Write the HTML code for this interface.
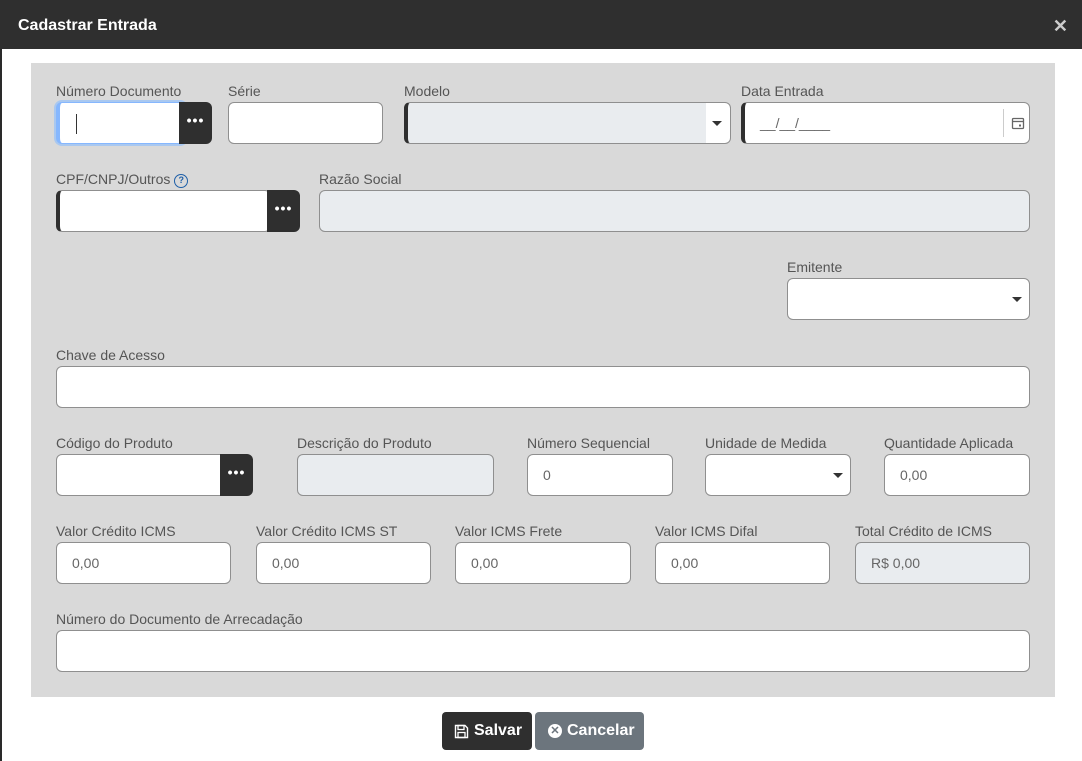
<!DOCTYPE html>
<html><head><meta charset="utf-8"><style>
*{box-sizing:border-box;margin:0;padding:0}
body{width:1082px;height:761px;background:#fff;font-family:"Liberation Sans",Arial,sans-serif;position:relative;overflow:hidden}
.hdr{position:absolute;left:0;top:0;width:1082px;height:49px;background:#2f2f2f;color:#fff}
.hdr .t{position:absolute;left:18px;top:17px;font-size:16px;font-weight:bold}
.hdr .x{position:absolute;right:14px;top:16px;font-size:18px;font-weight:bold;color:#ccc}
.side{position:absolute;left:0;top:49px;width:2px;height:712px;background:#2a2a2a}
.panel{position:absolute;left:31px;top:63px;width:1024px;height:634px;background:#d9d9d9}
.l{position:absolute;font-size:14px;color:#555}
.i{position:absolute;height:42px;background:#fff;border:1px solid #8f8f8f;border-radius:6px;font-size:14px;color:#666;padding:0 15px;line-height:40px}
.g{background:#e9ecef}
.lb{border-left:4px solid #2f2f2f}
.b{position:absolute;height:42px;background:#2f2f2f;border-radius:0 6px 6px 0;color:#fff;font-size:14px;font-weight:bold;text-align:center;line-height:36px;letter-spacing:1px}
.arr{position:absolute;width:0;height:0;border-left:5px solid transparent;border-right:5px solid transparent;border-top:5px solid #333}
.btn{position:absolute;top:712px;height:38px;border-radius:4px;color:#fff;font-size:16px;font-weight:bold;line-height:38px}
</style></head><body>
<div class="hdr"><div class="t">Cadastrar Entrada</div><div class="x">✕</div></div>
<div class="side"></div>
<div class="panel"></div>

<div class="l" style="left:56px;top:83px">Número Documento</div>
<div class="i lb" style="left:56px;top:102px;width:130px;border-color:#86b7fe;box-shadow:0 0 0 2px #a9c8f0"><span style="position:absolute;left:16px;top:11px;width:1px;height:20px;background:#333"></span></div>
<div class="b" style="left:179px;top:102px;width:33px">•••</div>
<div class="l" style="left:228px;top:83px">Série</div>
<div class="i" style="left:228px;top:102px;width:155px"></div>
<div class="l" style="left:404px;top:83px">Modelo</div>
<div class="i lb" style="left:404px;top:102px;width:327px;background:linear-gradient(to right,#e9ecef 298px,#fff 298px)"></div>
<div class="arr" style="left:712px;top:121px"></div>
<div class="l" style="left:741px;top:83px">Data Entrada</div>
<div class="i lb" style="left:741px;top:102px;width:289px;color:#666">__/__/____<span style="position:absolute;left:258px;top:6px;width:1px;height:28px;background:#ccc"></span>
<svg style="position:absolute;left:266px;top:13px" width="14" height="14" viewBox="0 0 14 14"><rect x="1.5" y="2.5" width="11" height="10" rx="1" fill="none" stroke="#666" stroke-width="1.3"/><line x1="1.5" y1="5.5" x2="12.5" y2="5.5" stroke="#666" stroke-width="1.3"/><rect x="8" y="8.5" width="2" height="2" fill="#666"/></svg></div>

<div class="l" style="left:56px;top:171px">CPF/CNPJ/Outros <span style="display:inline-block;width:14px;height:14px;border:1.5px solid #1d5fa8;border-radius:50%;font-size:9px;color:#1d5fa8;text-align:center;line-height:11px;font-weight:bold;vertical-align:1px">?</span></div>
<div class="i lb" style="left:56px;top:190px;width:215px"></div>
<div class="b" style="left:267px;top:190px;width:33px">•••</div>
<div class="l" style="left:319px;top:171px">Razão Social</div>
<div class="i g" style="left:319px;top:190px;width:711px"></div>

<div class="l" style="left:787px;top:259px">Emitente</div>
<div class="i" style="left:787px;top:278px;width:243px"></div>
<div class="arr" style="left:1012px;top:297px"></div>

<div class="l" style="left:56px;top:347px">Chave de Acesso</div>
<div class="i" style="left:56px;top:366px;width:974px"></div>

<div class="l" style="left:56px;top:435px">Código do Produto</div>
<div class="i" style="left:56px;top:454px;width:170px"></div>
<div class="b" style="left:220px;top:454px;width:33px">•••</div>
<div class="l" style="left:297px;top:435px">Descrição do Produto</div>
<div class="i g" style="left:297px;top:454px;width:197px"></div>
<div class="l" style="left:527px;top:435px">Número Sequencial</div>
<div class="i" style="left:527px;top:454px;width:146px">0</div>
<div class="l" style="left:705px;top:435px">Unidade de Medida</div>
<div class="i" style="left:705px;top:454px;width:146px"></div>
<div class="arr" style="left:833px;top:473px"></div>
<div class="l" style="left:884px;top:435px">Quantidade Aplicada</div>
<div class="i" style="left:884px;top:454px;width:146px">0,00</div>

<div class="l" style="left:56px;top:523px">Valor Crédito ICMS</div>
<div class="i" style="left:56px;top:542px;width:175px">0,00</div>
<div class="l" style="left:256px;top:523px">Valor Crédito ICMS ST</div>
<div class="i" style="left:256px;top:542px;width:175px">0,00</div>
<div class="l" style="left:455px;top:523px">Valor ICMS Frete</div>
<div class="i" style="left:455px;top:542px;width:176px">0,00</div>
<div class="l" style="left:655px;top:523px">Valor ICMS Difal</div>
<div class="i" style="left:655px;top:542px;width:175px">0,00</div>
<div class="l" style="left:855px;top:523px">Total Crédito de ICMS</div>
<div class="i g" style="left:855px;top:542px;width:175px">R$ 0,00</div>

<div class="l" style="left:56px;top:611px">Número do Documento de Arrecadação</div>
<div class="i" style="left:56px;top:630px;width:974px"></div>

<div class="btn" style="left:442px;width:90px;background:#2f2f2f;padding-left:12px">
<svg style="position:absolute;left:12px;top:12px" width="15" height="15" viewBox="0 0 15 15"><path d="M1.5 1.5h9.5l2.5 2.5v9.5h-12z" fill="none" stroke="#fff" stroke-width="1.4"/><rect x="4" y="1.5" width="6" height="4" fill="none" stroke="#fff" stroke-width="1.3"/><rect x="4" y="8.5" width="7" height="5" fill="none" stroke="#fff" stroke-width="1.3"/></svg>
<span style="position:absolute;left:32px">Salvar</span></div>
<div class="btn" style="left:535px;width:109px;background:#6c757d">
<span style="position:absolute;left:13px;top:12px;width:14px;height:14px;border-radius:50%;background:#fff;color:#6c757d;font-size:11px;line-height:14px;text-align:center">✕</span>
<span style="position:absolute;left:32px">Cancelar</span></div>
</body></html>
